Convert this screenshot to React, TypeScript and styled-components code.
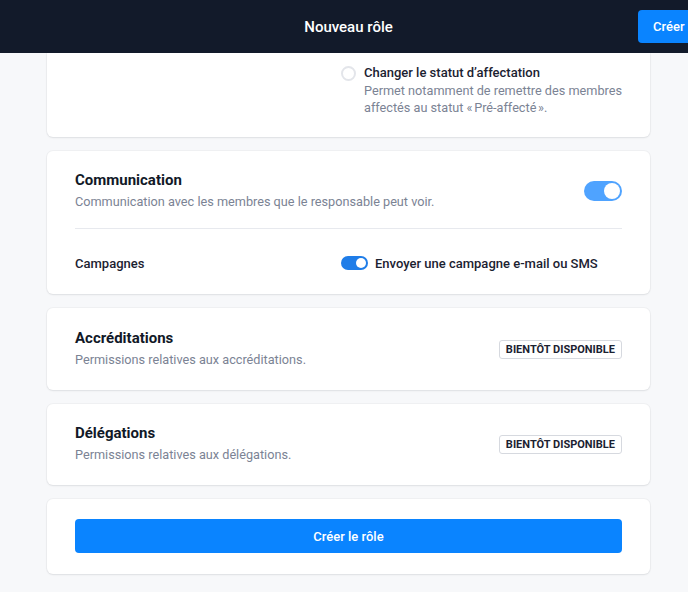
import React from "react";
import styled, { createGlobalStyle } from "styled-components";

const Global = createGlobalStyle`
  html, body { margin: 0; padding: 0; overflow: hidden; background: #f7f8fa; }
  body { font-family: Roboto, "Noto Sans", sans-serif; -webkit-font-smoothing: antialiased; }
  * { box-sizing: border-box; }
`;

const Page = styled.div`
  width: 697px;
  height: 592px;
  overflow: hidden;
  display: flex;
  flex-direction: column;
`;

const Header = styled.header`
  height: 53px;
  flex: none;
  background: #121a2a;
  display: grid;
  grid-template-columns: 1fr auto 1fr;
  align-items: center;
  position: relative;
  z-index: 2;
`;

const Title = styled.h1`
  grid-column: 2;
  margin: 0;
  color: #fff;
  font-size: 15px;
  font-weight: 500;
`;

const HeaderButton = styled.button`
  grid-column: 3;
  justify-self: end;
  width: 59px;
  height: 33px;
  padding: 0 0 0 15px;
  text-align: left;
  border: none;
  border-radius: 4px 0 0 4px;
  background: #0a84ff;
  color: #fff;
  font-family: inherit;
  font-size: 13px;
  font-weight: 500;
`;

const Main = styled.main`
  padding: 0 47px;
  display: flex;
  flex-direction: column;
  gap: 14px;
`;

const Card = styled.section<{ $cut?: boolean }>`
  background: #fff;
  border-radius: ${(p) => (p.$cut ? "0 0 6px 6px" : "6px")};
  box-shadow: 0 1px 2px rgba(17, 24, 39, 0.08), 0 0 0 1px rgba(17, 24, 39, 0.03);
  padding: ${(p) => (p.$cut ? "11px 28px 21px" : "0 28px")};
`;

const OptionGrid = styled.div`
  display: grid;
  grid-template-columns: 266px 1fr;
`;

const RadioOption = styled.label`
  grid-column: 2;
  display: grid;
  grid-template-columns: 15px 1fr;
  column-gap: 8px;
  align-items: start;
`;

const Radio = styled.span`
  width: 15px;
  height: 15px;
  margin-top: 2px;
  border-radius: 50%;
  border: 2px solid #e3e5ea;
  background: #fff;
`;

const OptionTitle = styled.div`
  font-size: 13px;
  font-weight: 500;
  color: #1b2231;
  line-height: 18px;
`;

const OptionDesc = styled.div`
  font-size: 12.7px;
  color: #7b8394;
  line-height: 17px;
  white-space: nowrap;
`;

const SectionHead = styled.div<{ $pt: number; $pb: number }>`
  display: flex;
  align-items: center;
  justify-content: space-between;
  padding: ${(p) => `${p.$pt}px 0 ${p.$pb}px`};
`;

const SectionText = styled.div`
  display: flex;
  flex-direction: column;
  gap: 3px;
`;

const SectionTitle = styled.h2`
  margin: 0;
  font-size: 15px;
  font-weight: 700;
  color: #111827;
  line-height: 19px;
`;

const SectionDesc = styled.p`
  margin: 0;
  font-size: 12.7px;
  color: #7b8394;
  line-height: 18px;
`;

const Divider = styled.hr`
  margin: 0;
  border: none;
  border-top: 1px solid #e7e9ee;
`;

const Row = styled.div`
  display: grid;
  grid-template-columns: 266px 1fr;
  align-items: center;
  height: 65px;
  padding-top: 3px;
`;

const RowLabel = styled.div`
  font-size: 13px;
  font-weight: 500;
  color: #1b2231;
`;

const ToggleLine = styled.div`
  display: flex;
  align-items: center;
  gap: 7px;
  font-size: 13px;
  font-weight: 500;
  color: #1b2231;
`;

const Toggle = styled.span<{ $w: number; $h: number; $bg: string }>`
  width: ${(p) => p.$w}px;
  height: ${(p) => p.$h}px;
  border-radius: ${(p) => p.$h}px;
  background: ${(p) => p.$bg};
  display: flex;
  justify-content: flex-end;
  align-items: center;
  padding: 2px;
  flex: none;
  &::after {
    content: "";
    width: ${(p) => p.$h - 4}px;
    height: ${(p) => p.$h - 4}px;
    border-radius: 50%;
    background: #fff;
  }
`;

const Badge = styled.span`
  border: 1px solid #d6d9df;
  border-radius: 3px;
  padding: 0 6px;
  height: 19px;
  display: inline-flex;
  align-items: center;
  font-size: 11px;
  font-weight: 700;
  color: #1b2231;
`;

const SubmitWrap = styled.div`
  padding: 20px 0 21px;
`;

const Submit = styled.button`
  width: 100%;
  height: 34px;
  border: none;
  border-radius: 4px;
  background: #0a84ff;
  color: #fff;
  font-family: inherit;
  font-size: 13px;
  font-weight: 500;
`;

export default function App() {
  return (
    <Page>
      <Global />
      <Header>
        <Title>Nouveau rôle</Title>
        <HeaderButton>Créer</HeaderButton>
      </Header>
      <Main>
        <Card $cut>
          <OptionGrid>
            <RadioOption>
              <Radio />
              <div>
                <OptionTitle>Changer le statut d’affectation</OptionTitle>
                <OptionDesc>
                  Permet notamment de remettre des membres
                  <br />
                  affectés au statut {"«\u202FPré-affecté\u202F»"}.
                </OptionDesc>
              </div>
            </RadioOption>
          </OptionGrid>
        </Card>

        <Card>
          <SectionHead $pt={20} $pb={17}>
            <SectionText>
              <SectionTitle>Communication</SectionTitle>
              <SectionDesc>Communication avec les membres que le responsable peut voir.</SectionDesc>
            </SectionText>
            <Toggle $w={38} $h={20} $bg="#4fa3ff" />
          </SectionHead>
          <Divider />
          <Row>
            <RowLabel>Campagnes</RowLabel>
            <ToggleLine>
              <Toggle $w={27} $h={14} $bg="#1f7de8" />
              Envoyer une campagne e-mail ou SMS
            </ToggleLine>
          </Row>
        </Card>

        <Card>
          <SectionHead $pt={21} $pb={21}>
            <SectionText>
              <SectionTitle>Accréditations</SectionTitle>
              <SectionDesc>Permissions relatives aux accréditations.</SectionDesc>
            </SectionText>
            <Badge>BIENTÔT DISPONIBLE</Badge>
          </SectionHead>
        </Card>

        <Card>
          <SectionHead $pt={20} $pb={21}>
            <SectionText>
              <SectionTitle>Délégations</SectionTitle>
              <SectionDesc>Permissions relatives aux délégations.</SectionDesc>
            </SectionText>
            <Badge>BIENTÔT DISPONIBLE</Badge>
          </SectionHead>
        </Card>

        <Card>
          <SubmitWrap>
            <Submit>Créer le rôle</Submit>
          </SubmitWrap>
        </Card>
      </Main>
    </Page>
  );
}
